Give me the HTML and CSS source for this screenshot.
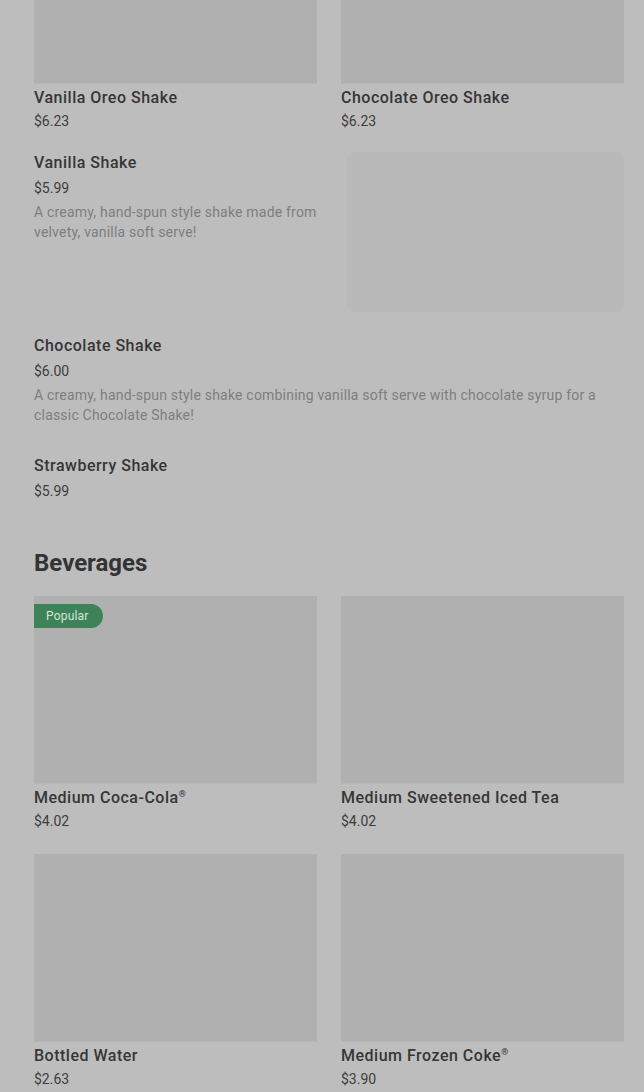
FILE: index.html
```html
<!DOCTYPE html>
<html lang="en">
<head>
<meta charset="utf-8">
<title>Menu</title>
<link rel="stylesheet" href="styles.css">
</head>
<body>
<main class="page">
  <section class="grid grid-top">
    <article class="card">
      <div class="card-img"></div>
      <h3 class="card-title">Vanilla Oreo Shake</h3>
      <div class="card-price">$6.23</div>
    </article>
    <article class="card">
      <div class="card-img"></div>
      <h3 class="card-title">Chocolate Oreo Shake</h3>
      <div class="card-price">$6.23</div>
    </article>
  </section>

  <section class="list">
    <article class="row">
      <div class="row-text">
        <h3 class="row-title">Vanilla Shake</h3>
        <div class="row-price">$5.99</div>
        <p class="row-desc">A creamy, hand-spun style shake made from velvety, vanilla soft serve!</p>
      </div>
      <div class="row-img"></div>
    </article>
    <article class="row">
      <div class="row-text">
        <h3 class="row-title">Chocolate Shake</h3>
        <div class="row-price">$6.00</div>
        <p class="row-desc">A creamy, hand-spun style shake combining vanilla soft serve with chocolate syrup for a classic Chocolate Shake!</p>
      </div>
    </article>
    <article class="row">
      <div class="row-text">
        <h3 class="row-title">Strawberry Shake</h3>
        <div class="row-price">$5.99</div>
      </div>
    </article>
  </section>

  <h2 class="section-title">Beverages</h2>
  <section class="grid">
    <article class="card">
      <div class="card-img"><span class="badge">Popular</span></div>
      <h3 class="card-title">Medium Coca-Cola<span class="reg">®</span></h3>
      <div class="card-price">$4.02</div>
    </article>
    <article class="card">
      <div class="card-img"></div>
      <h3 class="card-title">Medium Sweetened Iced Tea</h3>
      <div class="card-price">$4.02</div>
    </article>
    <article class="card">
      <div class="card-img"></div>
      <h3 class="card-title">Bottled Water</h3>
      <div class="card-price">$2.63</div>
    </article>
    <article class="card">
      <div class="card-img"></div>
      <h3 class="card-title">Medium Frozen Coke<span class="reg">®</span></h3>
      <div class="card-price">$3.90</div>
    </article>
  </section>
</main>
</body>
</html>
```

FILE: styles.css
```css
html, body {
  margin: 0;
  padding: 0;
  background: #bdbdbd;
  overflow: hidden;
}
body {
  font-family: Roboto, "Liberation Sans", sans-serif;
  color: #333333;
  height: 1092px;
}
.page {
  padding: 0 20px 0 34px;
}
.grid {
  display: grid;
  grid-template-columns: 1fr 1fr;
  column-gap: 24px;
  row-gap: 23px;
}
.grid-top {
  margin-top: -104px;
}
.card-img {
  position: relative;
  height: 188px;
  background: #b0b0b0;
  border-bottom: 1px solid #b5b5b5;
  box-sizing: border-box;
}
.card-title {
  margin: 4px 0 0;
  font-size: 16px;
  line-height: 20px;
  font-weight: 500;
  letter-spacing: 0.5px;
  color: #363636;
}
.reg {
  font-size: 9px;
  line-height: 0;
  vertical-align: super;
  letter-spacing: 0;
}
.card-price {
  margin-top: 3px;
  font-size: 14px;
  line-height: 20px;
  color: #3d3d3d;
}
.badge {
  position: absolute;
  left: 0;
  top: 8px;
  height: 24px;
  line-height: 24px;
  padding: 0 14px 0 12px;
  font-size: 12px;
  letter-spacing: 0.2px;
  color: #d3e6da;
  background: #3d8259;
  border-radius: 0 12px 12px 0;
}
.list {
  margin-top: 9px;
}
.row {
  display: flex;
  gap: 16px;
  padding: 12px 0 11px;
}
.row-text {
  flex: 1;
  padding-bottom: 7px;
}
.row-title {
  margin: 1px 0 0;
  font-size: 16px;
  line-height: 20px;
  font-weight: 500;
  letter-spacing: 0.5px;
  color: #363636;
}
.row-price {
  margin-top: 5px;
  font-size: 14px;
  line-height: 20px;
  color: #3d3d3d;
}
.row-desc {
  margin: 4px 0 0;
  font-size: 14px;
  line-height: 20px;
  letter-spacing: 0.2px;
  color: #7e7e7e;
}
.row-img {
  flex: 0 0 277px;
  height: 160px;
  background: #b9b9b9;
  border-radius: 8px;
}
.section-title {
  margin: 28px 0 17px;
  font-size: 24px;
  line-height: 32px;
  font-weight: 700;
  color: #333333;
}
```
